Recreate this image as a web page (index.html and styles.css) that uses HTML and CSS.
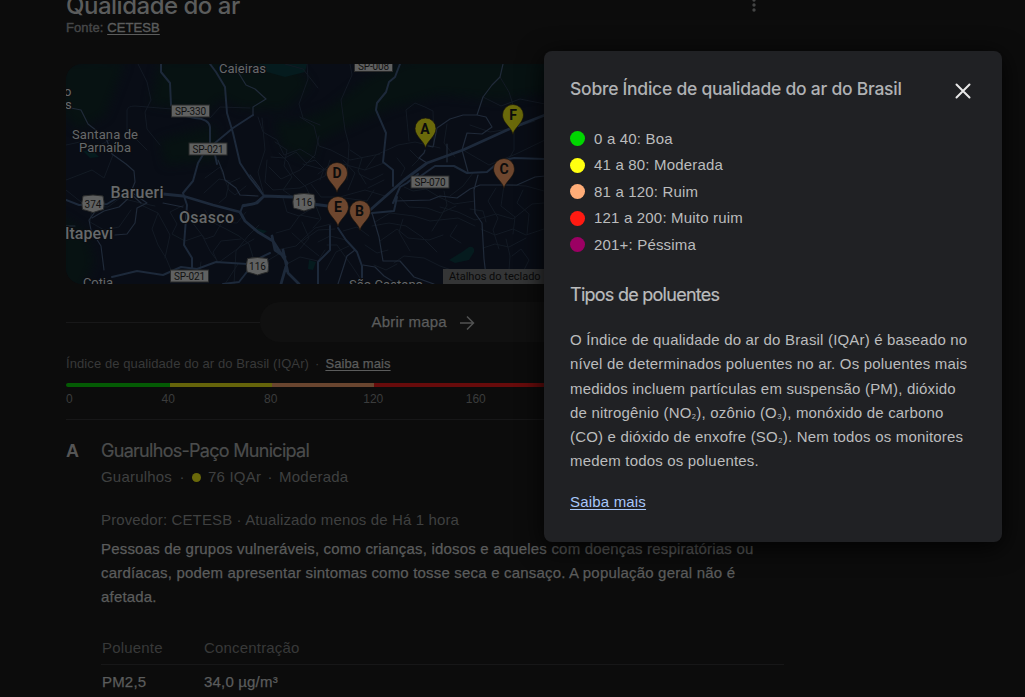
FILE: index.html
```html
<!DOCTYPE html>
<html lang="pt-BR">
<head>
<meta charset="utf-8">
<title>Qualidade do ar</title>
<link rel="stylesheet" href="styles.css">
</head>
<body>
<main class="page">
  <header class="header">
    <div>
      <h1 class="title">Qualidade do ar</h1>
      <p class="source">Fonte: <a class="link" href="#">CETESB</a></p>
    </div>
    <svg class="more" width="6" height="16" viewBox="0 0 6 16"><circle cx="3" cy="3" r="1.7"/><circle cx="3" cy="8" r="1.7"/><circle cx="3" cy="13" r="1.7"/></svg>
  </header>

  <div class="map">
    <svg class="map-art" width="718" height="220" viewBox="66 64 718 220">
      <defs>
        <path id="pin" d="M0 19.500C-1.600 12-10.500 8-10.500 0A10.500 10.500 0 0 1 10.500 0C10.500 8 1.600 12 0 19.500Z"/>
        <path id="shield" d="M-10 -7.500Q0 -9.500 10 -7.500Q12 0 10.500 6Q6 7 0 9Q-6 7 -10.500 6Q-12 0 -10 -7.500Z"/>
        <filter id="soft" color-interpolation-filters="sRGB"><feGaussianBlur stdDeviation="5"/></filter>
      </defs>
      <rect x="66" y="64" width="718" height="220" fill="#090d16"/>
      <g class="forest" filter="url(#soft)">
        <path d="M160 60L290 58L310 85L285 110L240 108L222 98L205 112L150 104Z"/>
        <path d="M330 108L370 76L410 60L550 60L550 92L500 100L440 94L390 108L340 130L305 148L290 125Z"/>
        <path d="M60 60L125 62L105 115L78 130L60 110Z"/>
        <path d="M60 215L86 232L94 262L82 290L60 290Z"/>
        <path d="M275 120L320 125L312 160L282 148Z"/>
        <path d="M160 140L215 125L218 160L165 165Z"/>
      </g>
      <g class="water">
        <path d="M258 64h49l-2 8-20 5-18-5z"/><path d="M449 260l13-8 7-5q6-1 5 5l-5 8-14 3z"/><path d="M83 151l9-1 7 7-9 1z"/><path d="M309 260l7 2-3 8-5-1zM255 228l12 3-4 3z"/>
      </g>
      <g class="streets">
        <path d="M127 130V110Q128 106 135 106L172 109M147 150L127 130M66 145L80 142L90 150L110 140M138 64L147 82L151 100L145 112L147 129L160 145M66 180L92 170L104 178L113 155"/>
        <path d="M210 118L220 107L250 108M258 117L263 132L277 140L284 155L300 149L315 158M262 118L265 150L258 172L264 195M285 64L303 69L318 88M307 64L308 79L299 104L303 118L320 125"/>
        <path d="M350 64L352 75L341 100L345 130L349 145L347 180M300 117L314 126L319 146L331 150L350 160L380 154M365 170L376 155L398 145L415 142L440 148M409 141L406 110L415 103L425 107L433 111L434 145M447 124L444 143L455 157"/>
        <path d="M500 77L509 92L514 108L514 150L507 162M483 97L501 106L520 99L545 104M470 125L490 132L510 129L535 121M463 150L489 165L516 154L545 140M544 191L526 186L507 185M504 185L501 206L515 217L513 234"/>
        <path d="M66 190L86 206L108 207L120 198L141 203L155 206M92 209L90 222L104 230L119 227L131 210M141 205L158 213L152 229L158 245L166 258L171 270M158 213L170 235L165 258"/>
        <path d="M184 205L170 212L177 224L172 234L185 241L202 235L210 251L218 262M192 222L205 239L214 236L222 222L237 223L246 212M205 210L212 222L226 229L239 236L249 244L253 257M219 203L226 197L229 183L240 178M204 193L219 179L230 181"/>
        <path d="M246 186L235 195L229 190L220 167L205 178M241 239L221 241L213 252L218 263L240 247L254 239M201 262L198 282M238 264L225 284M262 264L282 252M259 225L248 236L236 251L234 284"/>
        <path d="M267 160L265 182L273 190L300 188L325 176L330 160M269 167L281 179L300 170L315 155L319 136M279 153L288 162L293 174L306 187L311 198M283 198L287 212L299 216L316 206L321 219L313 228M276 233L290 229L300 215L319 219M292 233L304 244L319 256M277 250L296 246L304 238L315 228L331 224M287 264L300 257L318 261L325 250"/>
        <path d="M303 164L325 170L343 164L365 170L384 163M311 184L321 197L340 197L365 190L385 196M374 190L367 201L344 198M338 202L349 208L372 214M375 222L390 213L414 216L430 221L458 218L475 226M372 226L389 223L406 226L422 237L437 252M380 241L397 229L408 238L429 240L443 235M335 229L318 230L301 242M327 245L337 245L344 255L352 266L360 278M369 236L357 227L343 231M394 263L404 256L424 258L440 266L457 272"/>
        <path d="M404 187L413 191L426 189L439 197L454 204L475 201M400 197L409 207L427 208L441 213L456 206M450 196L463 186L473 173M444 191L447 205L440 218L432 231M440 207L458 212L475 220L496 214L513 219L532 204L544 203M481 229L495 235L513 229L526 235L544 229M483 248L495 244L509 247L526 238M496 188L488 201L498 218L493 230L499 249M523 190L517 203L529 214L527 234M506 239L510 256L508 284M512 256L521 249L529 260L524 270L544 276"/>
        <path d="M275 142L287 150L284 166L292 177L283 190L297 200M271 157L285 158L296 152L306 163L315 160L324 169L320 180M350 150L362 158L358 171L366 184M343 160L355 173L348 190M330 165L318 174M383 174L371 180L359 174M384 180L368 188M397 158L405 168L401 176M410 150L419 159L412 166M302 222L309 238L300 249M318 242L330 236L346 240M349 246L336 252L326 270M365 245L377 253L388 250M374 265L386 270L397 264M403 219L399 232L410 251M457 225L450 236L461 243M470 209L483 211L486 222"/>
      </g>
      <g class="roads">
        <path d="M238 72L246 85L255 89L266 99L253 107L253 115M503 64L500 77L492 85L483 97L477 115L463 115L450 119L437 128L433 147L428 146M425 150L424 153L419 158L427 163M477 115L486 117L492 127L482 134L467 133L462 150L468 172M447 144V162"/>
        <path d="M66 107L81 110L88 124L106 138L112 154L126 164L134 171L135 182L131 192L147 203L137 208L135 223L127 234L115 235M97 209L89 220L91 230L101 246L104 270M163 203L183 207M141 203L132 195L119 207L104 211L92 218"/>
        <path d="M372 213L379 237L383 261L400 261L414 277L434 284M395 201L430 200L440 196L457 198L470 189L480 185L500 185L517 185L526 181L535 177L545 176M478 175L474 190L475 213L482 223L484 259L487 284M355 250L347 256L338 284M363 265L375 267L384 276L397 284M66 226L75 226M218 160L223 172L225 180L236 188L240 195L258 196M250 175L259 187L264 196"/>
      </g>
      <g class="highways">
        <path d="M161 64L161 72L170 83L171 105L176 114L195 118Q209 119 210 127L210 143L198 163L193 181L183 193L187 205L184 245L192 258L192 272M112 277L137 271L163 275L181 267L197 269L216 262L247 264L270 253"/>
        <path d="M210 64L216 72L225 87L227 113L233 133L240 163L250 178L264 196L254 204L243 205L240 213M253 115L233 128L215 143M215 155L217 164M223 284L239 282L250 268"/>
        <path d="M66 200L79 205L107 204L124 194"/>
        <path d="M400 64L395 77L389 82L386 92L377 103L376 110L386 133L383 162L393 170V186M393 203L400 187L407 183L418 174L415 180L435 166L454 166L467 173L487 172L500 161L514 158L545 159M372 213L394 211L397 197M330 226L330 250L318 262L318 284M338 228L346 240L357 252L362 266V284"/>
        <path class="wide" d="M163 194L183 196L213 205L240 212L245 221L258 232L273 241L287 263L281 284M283 250L288 273L299 284M272 236L275 250L285 257M243 206L257 203L264 196L293 197M312 204L328 206M360 219L404 180L427 163L463 150L507 130L545 115"/>
      </g>
      <g class="plates">
        <rect x="171.500" y="105" width="38" height="12"/><rect x="189" y="143" width="38" height="12"/><rect x="354.500" y="60" width="38" height="11.500"/><rect x="411" y="176" width="38" height="12"/><rect x="170.500" y="270" width="38" height="12"/>
        <use href="#shield" x="93" y="203.500"/><use href="#shield" x="304" y="202"/><use href="#shield" x="257.500" y="266"/>
      </g>
      <g class="plate-text">
        <text x="190.500" y="114.500" textLength="31">SP-330</text><text x="208" y="152.500" textLength="31">SP-021</text><text x="373.500" y="69.500" textLength="31">SP-008</text><text x="430" y="185.500" textLength="31">SP-070</text><text x="189.500" y="279.500" textLength="31">SP-021</text>
        <text x="93" y="207.500">374</text><text x="304" y="206">116</text><text x="257.500" y="270">116</text>
      </g>
      <g class="places">
        <text x="219" y="73" textLength="47">Caieiras</text><text x="72" y="139" textLength="66">Santana de</text><text x="79" y="152" textLength="52">Parnaíba</text><text x="83" y="287" textLength="30">Cotia</text><text x="349" y="289" textLength="74">São Caetano</text><text x="64" y="96">o</text><text x="65" y="109">s</text>
        <g class="city"><text x="110.500" y="198" textLength="53">Barueri</text><text x="179" y="222.500" textLength="55">Osasco</text><text x="65" y="239" textLength="48">Itapevi</text></g>
      </g>
      <g class="pins">
        <use href="#pin" x="425.500" y="128.500" class="moderate"/><use href="#pin" x="513" y="115" class="moderate"/><use href="#pin" x="504" y="169"/><use href="#pin" x="337" y="173"/><use href="#pin" x="338" y="207"/><use href="#pin" x="360" y="211"/>
      </g>
      <g class="pin-text"><text x="425" y="133.500">A</text><text x="513" y="120">F</text><text x="504" y="174">C</text><text x="337" y="177.500">D</text><text x="338" y="212">E</text><text x="359.500" y="216">B</text></g>
    </svg>
    <span class="shortcuts">Atalhos do teclado</span>
  </div>

  <div class="open-map">
    <span class="open-button">Abrir mapa
      <svg width="16" height="16" viewBox="0 0 16 16"><path d="M1 8H14M8 1.500L14.500 8L8 14.500"/></svg>
    </span>
  </div>

  <p class="index">Índice de qualidade do ar do Brasil (IQAr)<span class="dot">·</span><a class="link" href="#">Saiba mais</a></p>
  <div class="scale"><i class="good"></i><i class="moderate"></i><i class="poor"></i><i class="bad"></i></div>
  <div class="ticks"><span>0</span><span>40</span><span>80</span><span>120</span><span>160</span></div>

  <section class="station">
    <b class="letter">A</b>
    <div class="details">
      <h2 class="name">Guarulhos-Paço Municipal</h2>
      <p class="meta"><span>Guarulhos</span><span class="sep first">·</span><i class="level"></i><span>76 IQAr</span><span class="sep">·</span><span>Moderada</span></p>
      <p class="provider">Provedor: CETESB · Atualizado menos de Há 1 hora</p>
      <p class="advice">Pessoas de grupos vulneráveis, como crianças, idosos e aqueles com doenças respiratórias ou<br>cardíacas, podem apresentar sintomas como tosse seca e cansaço. A população geral não é<br>afetada.</p>
      <div class="row head"><span>Poluente</span><span>Concentração</span></div>
      <div class="row"><span>PM2,5</span><span>34,0 µg/m³</span></div>
    </div>
  </section>
</main>

<aside class="dialog">
  <div class="dialog-top">
    <h2 class="dialog-title">Sobre Índice de qualidade do ar do Brasil</h2>
    <svg class="close" width="16" height="16" viewBox="0 0 16 16"><path d="M1.500 1.500L14.500 14.500M14.500 1.500L1.500 14.500"/></svg>
  </div>
  <ul class="legend">
    <li class="c-good">0 a 40: Boa</li>
    <li class="c-moderate">41 a 80: Moderada</li>
    <li class="c-poor">81 a 120: Ruim</li>
    <li class="c-bad">121 a 200: Muito ruim</li>
    <li class="c-worst">201+: Péssima</li>
  </ul>
  <h3 class="dialog-sub">Tipos de poluentes</h3>
  <p class="dialog-text">O Índice de qualidade do ar do Brasil (IQAr) é baseado no<br>nível de determinados poluentes no ar. Os poluentes mais<br>medidos incluem partículas em suspensão (PM), dióxido<br>de nitrogênio (NO<span class="count">₂</span>), ozônio (O<span class="count">₃</span>), monóxido de carbono<br>(CO) e dióxido de enxofre (SO<span class="count">₂</span>). Nem todos os monitores<br>medem todos os poluentes.</p>
  <a class="learn" href="#">Saiba mais</a>
</aside>
</body>
</html>
```
FILE: styles.css
```css
* { box-sizing: border-box; }
html, body { height: 697px; overflow: hidden; }
body { margin: 0; background: #0c0c0c; color: #5b5c5c; font: 15px/24px "Liberation Sans", Arial, sans-serif; }
h1, h2, h3, p, ul { margin: 0; padding: 0; font-weight: 400; }
.page { width: 718px; margin-left: 66px; }
.header { display: flex; justify-content: space-between; height: 64px; }
.title { margin-top: -9px; font: 500 24px/30px Inter, sans-serif; letter-spacing: -.49px; white-space: nowrap; }
.source { font-size: 13px; line-height: 13px; color: #464748; -webkit-text-stroke: .4px; letter-spacing: .1px; }
.link { color: #5b5c5c; text-decoration: underline; text-underline-offset: 2px; }
.more { margin: -3px 27px 0 0; fill: #444545; }

.map { position: relative; height: 220px; border-radius: 16px; overflow: hidden; }
.map-art { display: block; font-family: Roboto, sans-serif; }
.forest { fill: #071212; }
.water { fill: #051b1e; }
.streets, .roads, .highways { fill: none; stroke-linejoin: round; stroke-linecap: round; }
.streets { stroke: #131a24; stroke-width: 1; }
.roads { stroke: #202a39; stroke-width: 1.2; }
.highways { stroke: #1d293a; stroke-width: 2; }
.highways .wide { stroke-width: 2.8; }
.plates { fill: #606161; stroke: #292a2a; stroke-width: 1; }
.plate-text { fill: #111; font-size: 10px; font-weight: 400; text-anchor: middle; }
.places { fill: #66696b; stroke: #0b0d11; stroke-width: 2px; paint-order: stroke; font-size: 13px; font-weight: 400; }
.city { font-size: 16px; font-weight: 500; }
.pins { fill: #6d462e; stroke: #17120d; stroke-width: .7; }
.pins .moderate { fill: #6a690a; }
.pin-text { fill: #0c0c0c; font-size: 14px; font-weight: 700; text-anchor: middle; }
.shortcuts { position: absolute; left: 377px; top: 205px; width: 101px; height: 15px; padding-left: 6px; background: #343536; color: #090909; font: 11px/15px Roboto, sans-serif; letter-spacing: 0; white-space: nowrap; }

.open-map { display: flex; align-items: center; height: 76px; }
.open-map::before, .open-map::after { content: ""; flex: 1; height: 1px; background: #181819; }
.open-button { display: flex; align-items: center; gap: 12px; width: 330px; height: 40px; padding-left: 111.500px; border-radius: 20px; background: #101010; -webkit-text-stroke: .25px; letter-spacing: .2px; }
.open-button svg { margin-top: 2px; fill: none; stroke: #515252; stroke-width: 1.5; }

.index { height: 23px; padding-top: 1px; font-size: 13px; line-height: 6px; color: #383939; letter-spacing: .09px; }
.index .dot { margin: 0 6px; }
.index .link { -webkit-text-stroke: .25px; }
.scale { display: flex; height: 4px; border-radius: 2px 0 0 2px; overflow: hidden; }
.scale i { width: 102px; }
.scale .good { width: 104px; background: #045b04; }
.scale .moderate { background: #65640a; }
.scale .poor { background: #69452f; }
.scale .bad { flex: 1; background: #670b0b; }
.ticks { display: grid; grid-template-columns: 51px repeat(4, 102.5px); height: 33px; border-bottom: 1px solid #171718; font-size: 12px; color: #3b3c3c; text-align: center; }
.ticks span:first-child { text-align: left; }

.station { display: grid; grid-template-columns: 35px 1fr; padding-top: 19px; }
.letter { font: 700 18px/24px "Liberation Sans", sans-serif; color: #555; }
.name { font: 400 18px/24px Inter, sans-serif; letter-spacing: -.71px; color: #4b4c4c; -webkit-text-stroke: .2px; }
.meta { display: flex; align-items: center; height: 28px; color: #3f4040; letter-spacing: .2px; }
.sep { width: 18px; text-align: center; }
.sep.first { width: 20px; }
.level { width: 9px; height: 9px; margin-right: 7px; border-radius: 50%; background: #6a690a; }
.provider { margin-top: 17px; height: 29px; color: #3f4040; letter-spacing: .13px; }
.advice { -webkit-text-stroke: .25px; letter-spacing: .188px; white-space: nowrap; }
.row { display: grid; grid-template-columns: 102px 1fr; padding-left: 1px; height: 34px; padding-top: 5px; letter-spacing: .18px; -webkit-text-stroke: .25px; }
.row.head { margin-top: 22px; border-bottom: 1px solid #171718; color: #383939; -webkit-text-stroke: 0; }

.dialog { position: absolute; left: 544px; top: 51px; width: 458px; height: 491px; padding: 26px 31px 0 26px; border-radius: 8px; background: #202124; color: #bbbcbd; box-shadow: 0 5px 26px rgba(0,0,0,.9); letter-spacing: .183px; }
.dialog-top { display: flex; justify-content: space-between; align-items: flex-start; height: 48.500px; }
.dialog-title { font: 500 17.500px/24px Inter, sans-serif; letter-spacing: -.25px; color: #b0b2b4; white-space: nowrap; }
.close { margin-top: 6px; fill: none; stroke: #e8e8e8; stroke-width: 2; stroke-linecap: round; }
.legend { list-style: none; }
.legend li { display: flex; align-items: center; gap: 9px; height: 26.550px; }
.legend li::before { content: ""; width: 15px; height: 15px; border-radius: 50%; background: var(--c); }
.c-good { --c: #00d600; }
.c-moderate { --c: #ffff10; }
.c-poor { --c: #ffad78; }
.c-bad { --c: #ff1a12; }
.c-worst { --c: #9b0063; }
.dialog-sub { margin-top: 25px; font: 400 18px/24px Inter, sans-serif; letter-spacing: -.74px; -webkit-text-stroke: .2px; }
.dialog-text { margin-top: 21px; line-height: 24.200px; white-space: nowrap; }
.count { font-size: 12px; line-height: 1; }
.learn { display: block; margin-top: 17px; color: #a8c7fa; text-underline-offset: 2px; }
```
